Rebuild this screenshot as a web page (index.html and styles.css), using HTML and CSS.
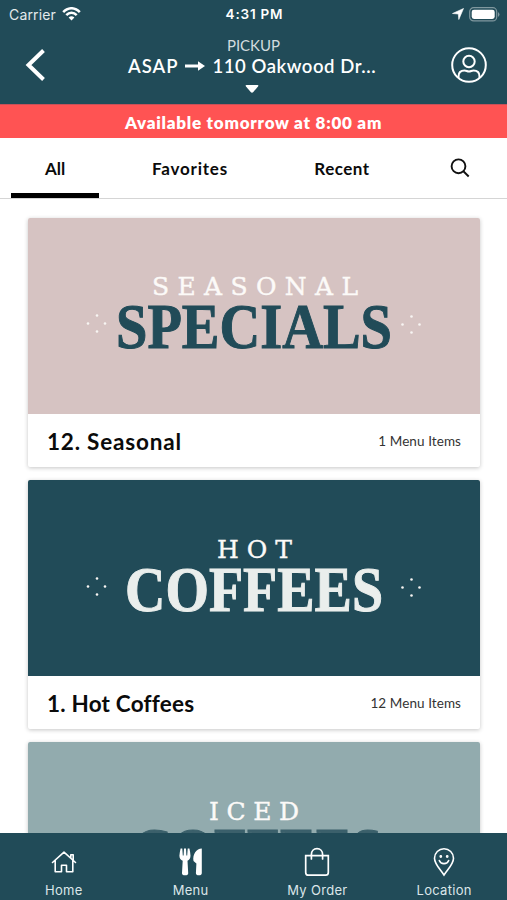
FILE: index.html
```html
<!DOCTYPE html>
<html lang="en">
<head>
<meta charset="utf-8">
<meta name="viewport" content="width=device-width, initial-scale=1">
<title>Menu</title>
<link rel="stylesheet" href="styles.css">
</head>
<body>
<div class="app">
  <header class="header">
    <div class="status">
      <div class="carrier"><span>Carrier</span>
        <svg width="19" height="14" viewBox="0 0 19 14" fill="none" stroke="#fff" stroke-width="2.5"><path d="M1.2 5.2C6-.1 13-.1 17.8 5.2M4.3 8.1c3-3.1 7.400-3.100 10.400 0"/><path d="M9.500 13.500 6.600 10.500q2.900-2.300 5.800 0z" fill="#fff" stroke="none"/></svg>
      </div>
      <div class="clock">4:31 PM</div>
      <div class="indicators">
        <svg width="12" height="12" viewBox="0 0 12 12"><path d="M11.500.5 6.800 11.500 6.300 6 .5 5.500z" fill="#fff" stroke="#fff" stroke-width=".6"/></svg>
        <svg width="31" height="15" viewBox="0 0 31 15"><rect x=".7" y=".7" width="27" height="13.200" rx="4" fill="none" stroke="#80989f" stroke-width="1.200"/><rect x="2.700" y="2.700" width="23" height="9.200" rx="2.300" fill="#fff"/><path d="M29 5v5q3-2.500 0-5" fill="#80989f"/></svg>
      </div>
    </div>
    <div class="order">
      <svg class="back" width="22" height="34" viewBox="0 0 22 34"><path d="M19.500 2.500 4.500 17l15 14.500" fill="none" stroke="#fff" stroke-width="4"/></svg>
      <div class="destination">
        <div class="mode">PICKUP</div>
        <div class="place"><span class="when">ASAP</span>
          <svg width="20" height="12" viewBox="0 0 20 12"><path d="M0 6h15" stroke="#fff" stroke-width="3"/><path d="m13 1.200 7 4.800-7 4.800z" fill="#fff"/></svg>
          <span class="where">110 Oakwood Dr...</span></div>
        <svg class="caret" width="14" height="8" viewBox="0 0 14 8"><path d="M1.500 0h11q1.500 0 .5 1.400L8.300 7q-1.300 1.400-2.600 0L1 1.400Q0 0 1.500 0" fill="#fff"/></svg>
      </div>
      <svg class="profile" width="36" height="36" viewBox="0 0 36 36" fill="none" stroke="#fff" stroke-width="2"><circle cx="18" cy="18" r="16.800"/><circle cx="18" cy="14.500" r="5.700"/><path d="M7.500 31v-1.500c0-4 2.500-6 6-6 2 0 2.500 1 4.500 1s2.500-1 4.500-1c3.500 0 6 2 6 6V31"/></svg>
    </div>
  </header>
  <div class="notice"><span>Available tomorrow at 8:00 am</span></div>
  <nav class="tabs">
    <div class="tab active"><span class="all">All</span></div>
    <div class="tab"><span class="favorites">Favorites</span></div>
    <div class="tab"><span class="recent">Recent</span></div>
    <div class="tab search"><svg width="20" height="20" viewBox="0 0 20 20" fill="none" stroke="#111" stroke-width="1.900"><circle cx="8.500" cy="8.300" r="6.900"/><path d="m13.400 13.300 5.300 5.200"/></svg></div>
  </nav>
  <main class="list">
    <article class="card">
      <svg class="art rose" viewBox="0 0 452 195">
        <text class="small" x="124" y="76" textLength="206">SEASONAL</text>
        <text class="large" x="88" y="129" textLength="276" lengthAdjust="spacingAndGlyphs">SPECIALS</text>
        <g class="dots"><circle cx="69" cy="97" r="1.300"/><circle cx="60" cy="105" r="1.300"/><circle cx="77" cy="105" r="1.300"/><circle cx="69" cy="113" r="1.300"/><circle cx="383.500" cy="98" r="1.300"/><circle cx="374.500" cy="106" r="1.300"/><circle cx="391.500" cy="106" r="1.300"/><circle cx="383.500" cy="114" r="1.300"/></g>
      </svg>
      <div class="caption"><h2 class="seasonal">12. Seasonal</h2><span>1 Menu Items</span></div>
    </article>
    <article class="card">
      <svg class="art teal" viewBox="0 0 452 195">
        <text class="small" x="189" y="77" textLength="75">HOT</text>
        <text class="large" x="97" y="130" textLength="258" lengthAdjust="spacingAndGlyphs">COFFEES</text>
        <g class="dots"><circle cx="69" cy="98" r="1.300"/><circle cx="60" cy="106" r="1.300"/><circle cx="77" cy="106" r="1.300"/><circle cx="69" cy="114" r="1.300"/><circle cx="383.500" cy="99" r="1.300"/><circle cx="374.500" cy="107" r="1.300"/><circle cx="391.500" cy="107" r="1.300"/><circle cx="383.500" cy="115" r="1.300"/></g>
      </svg>
      <div class="caption"><h2 class="hot">1. Hot Coffees</h2><span>12 Menu Items</span></div>
    </article>
    <article class="card">
      <svg class="art sage" viewBox="0 0 452 195">
        <text class="small" x="181" y="77" textLength="90">ICED</text>
        <text class="large" x="105" y="129" textLength="249" lengthAdjust="spacingAndGlyphs">COFFEES</text>
      </svg>
    </article>
  </main>
  <footer class="bar">
    <div class="item">
      <svg width="26" height="30" viewBox="0 0 26 30" fill="none" stroke="#fff" stroke-width="1.600" stroke-linejoin="round" stroke-linecap="round"><path d="M1.500 15.500 13 5.200l11.500 10.300M19.800 11V7.800h2.400v5.400M4.200 13.500v11.300h6.300v-6.500h5v6.500h6.300V13.500"/></svg>
      <span>Home</span></div>
    <div class="item">
      <svg width="26" height="30" viewBox="0 0 26 30" fill="#fff"><path d="M2.600 1.500h1.700l.5 7h.8l.4-7h2l.4 7h.8l.5-7h1.700q1 4 1.100 7.300c0 2.700-1.300 4.300-3 5L10.200 26q.2 2.300-3.100 2.300T4 26l.7-12.200c-2-.7-3.300-2.300-3.300-5Q1.600 5.500 2.600 1.500M23.800 1.500V26q0 2.300-3 2.300-2.900 0-2.900-2.300l.5-9.500-2.900-2.400C14.300 7.500 18.500 1.500 23.800 1.500"/></svg>
      <span class="menu">Menu</span></div>
    <div class="item">
      <svg width="26" height="30" viewBox="0 0 26 30" fill="none" stroke="#fff" stroke-width="1.700" stroke-linecap="round"><path d="M1.700 8.700h22.600v16.800q0 2.700-2.700 2.700H4.400q-2.700 0-2.700-2.700zM7.400 12V7.600C7.400 4 9.700 1.700 13 1.700s5.600 2.300 5.600 5.900V12"/></svg>
      <span class="my-order">My Order</span></div>
    <div class="item">
      <svg width="26" height="30" viewBox="0 0 26 30" fill="none" stroke="#fff" stroke-width="1.600" stroke-linecap="round"><path d="M13 28C9 22 3.500 17 3.500 11.200A9.500 9.500 0 0 1 22.500 11.200C22.500 17 17 22 13 28z"/><path d="M8.300 13.500c1.500 4.200 7.900 4.200 9.400 0"/><circle cx="9.800" cy="9.500" r=".6" fill="#fff"/><circle cx="16.200" cy="9.500" r=".6" fill="#fff"/></svg>
      <span class="location">Location</span></div>
  </footer>
</div>
</body>
</html>
```
FILE: styles.css
```css
* { box-sizing: border-box; }
body { margin: 0; background: #fff; font-family: Lato, "Open Sans", sans-serif; color: #0b0b0b; }
svg { display: block; flex: none; }
.app { height: 900px; display: flex; flex-direction: column; overflow: hidden; }
.header { height: 104px; flex: none; background: #214b58; color: #fff; }
.status { height: 28px; display: grid; grid-template-columns: 1fr auto 1fr; align-items: center; padding: 0 7px 0 9px; font-family: Inter, sans-serif; font-size: 14px; }
.carrier { display: flex; align-items: center; gap: 6px; color: #e4eaec; letter-spacing: .15px; }
.clock { font-weight: 600; font-size: 13.5px; letter-spacing: .8px; }
.indicators { display: flex; justify-content: flex-end; align-items: center; gap: 5px; }
.order { height: 76px; display: grid; grid-template-columns: 80px 1fr 80px; }
.back { margin: 20px 0 0 24px; }
.profile { margin: 19px 0 0 24px; }
.destination { display: flex; flex-direction: column; align-items: center; }
.mode { margin-top: 8px; font-size: 15px; line-height: 18px; color: #d3dcdf; }
.place { height: 25px; display: flex; align-items: center; gap: 7px; font-size: 18.5px; font-weight: 600; white-space: nowrap; padding-bottom: 1px; margin-right: 3px; }
.when { letter-spacing: 1px; }
.where { letter-spacing: .55px; }
.caret { margin: 6px 4px 0 0; }
.notice { height: 34px; flex: none; display: flex; justify-content: center; align-items: center; background: #ff5353; color: #fff; font-size: 17px; font-weight: 800; letter-spacing: .76px; border-top: 1px solid #c85058; padding-top: 2px; }
.tabs { height: 61px; flex: none; display: grid; grid-template-columns: 88px 182px 122px 1fr; padding-left: 11px; border-bottom: 1px solid #d5d5d5; }
.tab { display: flex; align-items: center; justify-content: center; font-size: 17px; font-weight: 700; padding-top: 4px; border-bottom: 4px solid transparent; }
.tab.active { border-bottom: 5px solid #000; padding-top: 5px; }
.favorites { letter-spacing: .8px; }
.recent { letter-spacing: .5px; }
.search { padding-left: 9px; padding-top: 3px; }
.list { flex: 1; min-height: 0; overflow: hidden; padding: 19px 27px 0 28px; display: flex; flex-direction: column; gap: 13px; }
.card { flex: none; background: #fff; border-radius: 2px; box-shadow: 0 1px 4px rgba(0, 0, 0, .23); overflow: hidden; }
.art { width: 452px; height: 196px; }
.rose { background: #d6c3c2; fill: #214b58; }
.teal { background: #214b58; fill: #eaeeec; }
.sage { background: #92abae; fill: #3b606b; }
.small { font-family: "DejaVu Serif", serif; font-size: 25px; fill: #fcfaf8; stroke: #fcfaf8; stroke-width: .4px; }
.large { font-family: "Liberation Serif", serif; font-size: 63px; font-weight: 700; stroke-width: 1px; }
.rose .large { stroke: #214b58; }
.teal .large { stroke: #eaeeec; }
.sage .large { stroke: #3b606b; }
.dots { fill: #f8f5f3; }
.caption { height: 53px; padding: 1px 19px 0; display: flex; align-items: center; justify-content: space-between; }
.caption h2 { margin: 0; font-size: 22.5px; font-weight: 700; }
.caption .seasonal { letter-spacing: .8px; }
.caption .hot { letter-spacing: .2px; }
.caption span { font-size: 13.5px; color: #333; letter-spacing: .08px; }
.bar { height: 67px; flex: none; background: #214b58; display: grid; grid-template-columns: repeat(4, 1fr); color: #dce6e9; font-family: Inter, sans-serif; font-size: 13px; }
.item { display: flex; flex-direction: column; align-items: center; padding: 14px 0 0 1px; gap: 5px; line-height: 17px; letter-spacing: .3px; }
```
